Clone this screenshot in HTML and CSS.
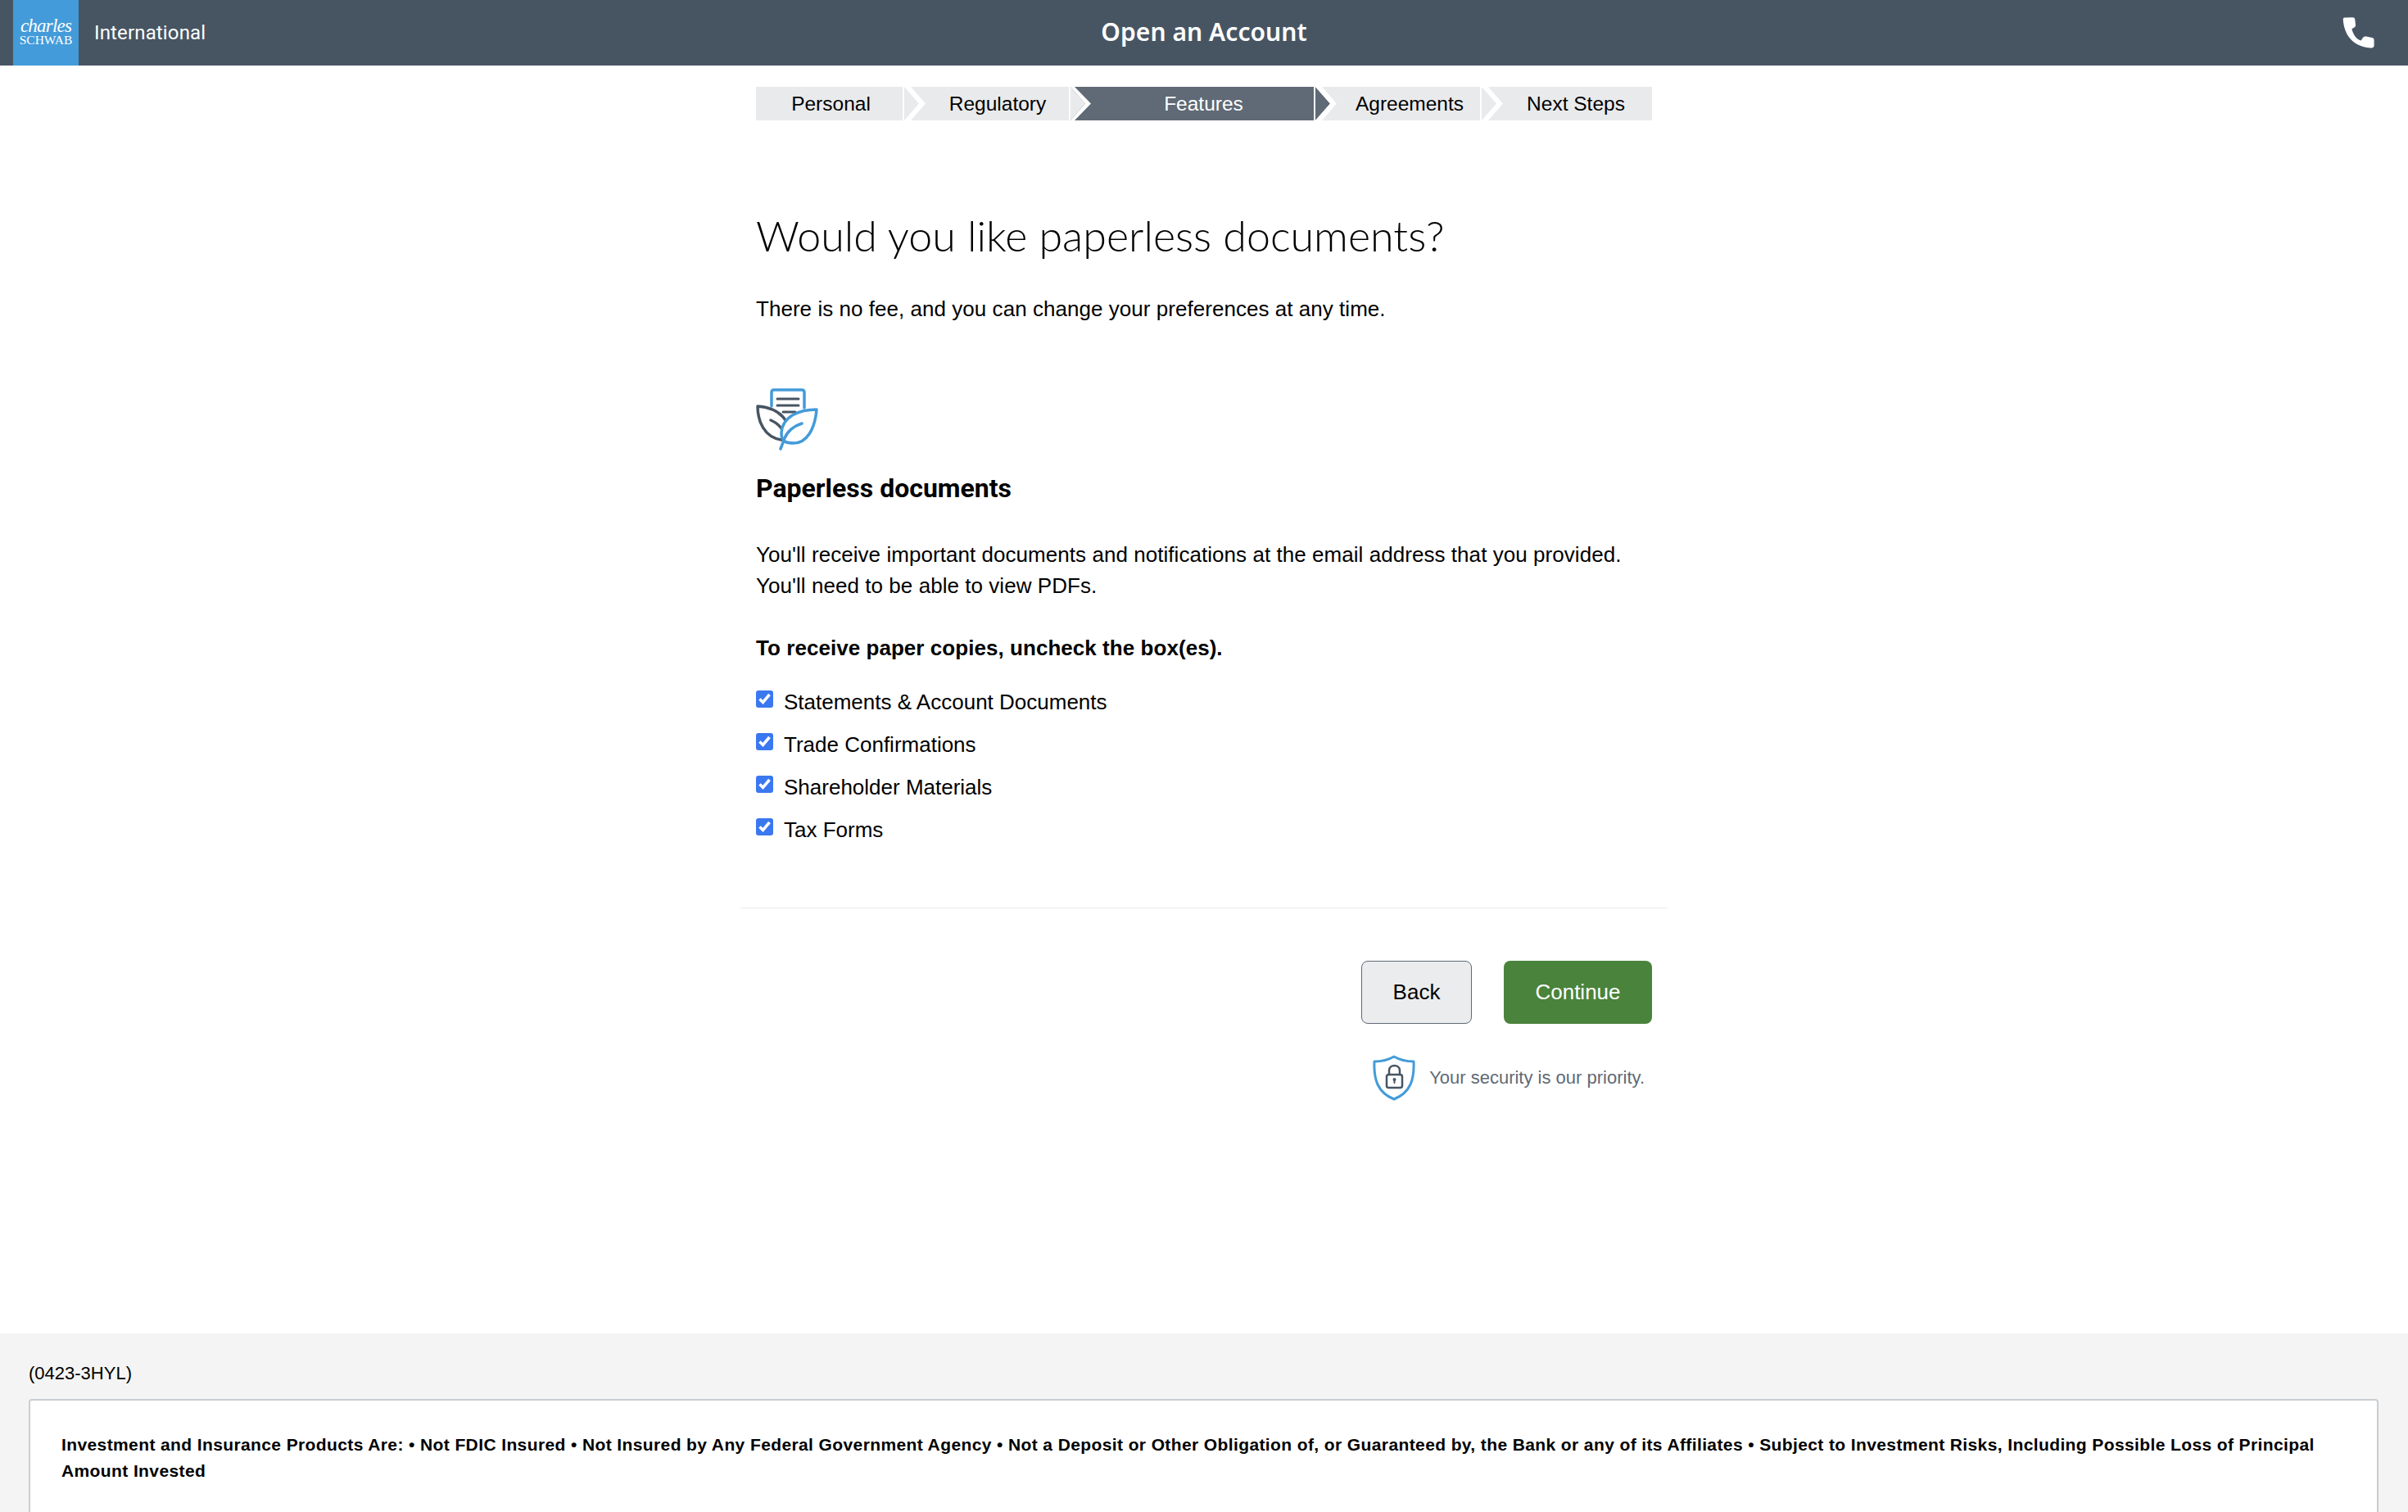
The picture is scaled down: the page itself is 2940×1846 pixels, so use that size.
FILE: index.html
```html
<!DOCTYPE html>
<html lang="en">
<head>
<meta charset="utf-8">
<title>Open an Account</title>
<link rel="stylesheet" href="styles.css">
</head>
<body>
<header class="topbar">
  <div class="brand">
    <div class="logo"><span class="logo-top">charles</span><span class="logo-bottom">SCHWAB</span></div>
    <span class="brand-label">International</span>
  </div>
  <div class="topbar-title">Open an Account</div>
  <svg class="phone" viewBox="0 0 40 40" width="40" height="40"><path fill="#fff" d="M2.5 1.5 C1 1.7 .6 2.8 .8 4.5 C2 19 9 36 34 38.6 C37 38.9 38.6 38 38.6 35.6 L38.6 29 C38.6 27 37.6 26.2 36 25.9 L29 24.6 C27 24.3 25.8 24.9 24.8 26.3 L22.6 29.6 C16.6 27.5 13 22 11.4 15.2 L14.4 13.6 C15.8 12.8 16.2 11.6 16 10 L15.2 3.6 C15 2 14 1.2 12.4 1.2 Z"/></svg>
</header>

<main class="content">
  <nav class="stepper">
    <div class="step s1"><span>Personal</span></div>
    <div class="step s2"><span>Regulatory</span></div>
    <div class="step s3"><span>Features</span></div>
    <div class="step s4"><span>Agreements</span></div>
    <div class="step s5"><span>Next Steps</span></div>
  </nav>

  <h1 class="title">Would you like paperless documents?</h1>
  <p class="lead">There is no fee, and you can change your preferences at any time.</p>

  <svg class="leaf" viewBox="0 0 76 76" width="76" height="76" fill="none" stroke-linecap="round" stroke-linejoin="round">
    <path stroke="#439bd9" stroke-width="3.5" d="M19 22 V5 Q19 2 22 2 H56 Q59 2 59 5 V24"/>
    <path stroke="#475563" stroke-width="3" d="M26 13 H52 M26 21 H52 M33 29 H48"/>
    <path stroke="#475563" stroke-width="3.5" d="M36 39 C28 27 16 23 2 22 C2 40 10 60 31 63"/>
    <path stroke="#475563" stroke-width="3.5" d="M18 39 C23 41 28 45 31 49"/>
    <path stroke="#439bd9" stroke-width="3.5" d="M74 26 C55 26 32 33 31 55 C31 66 38 67 46 67 C62 67 72 50 74 26 Z"/>
    <path stroke="#439bd9" stroke-width="3.5" d="M56 43 C46 46 38 53 35 61 L30 74"/>
  </svg>

  <h2 class="subtitle">Paperless documents</h2>
  <p class="body">You'll receive important documents and notifications at the email address that you provided.<br>You'll need to be able to view PDFs.</p>
  <p class="instruction">To receive paper copies, uncheck the box(es).</p>

  <ul class="checks">
    <li class="check"><span class="box"><svg viewBox="0 0 21 21" width="21" height="21"><path d="M4.5 10.5 L8.5 14.5 L16.5 5" fill="none" stroke="#fff" stroke-width="3.5"/></svg></span>Statements &amp; Account Documents</li>
    <li class="check"><span class="box"><svg viewBox="0 0 21 21" width="21" height="21"><path d="M4.5 10.5 L8.5 14.5 L16.5 5" fill="none" stroke="#fff" stroke-width="3.5"/></svg></span>Trade Confirmations</li>
    <li class="check"><span class="box"><svg viewBox="0 0 21 21" width="21" height="21"><path d="M4.5 10.5 L8.5 14.5 L16.5 5" fill="none" stroke="#fff" stroke-width="3.5"/></svg></span>Shareholder Materials</li>
    <li class="check"><span class="box"><svg viewBox="0 0 21 21" width="21" height="21"><path d="M4.5 10.5 L8.5 14.5 L16.5 5" fill="none" stroke="#fff" stroke-width="3.5"/></svg></span>Tax Forms</li>
  </ul>

  <hr class="rule">

  <div class="actions">
    <button class="btn btn-back">Back</button>
    <button class="btn btn-next">Continue</button>
  </div>
  <div class="security">
    <svg viewBox="0 0 52 56" width="52" height="56" fill="none" stroke-linecap="round">
      <path stroke="#439bd9" stroke-width="3" stroke-linejoin="round" d="M26 2 C19 6 10 8 2 8 C1 30 6 46 26 54 C46 46 51 30 50 8 C42 8 33 6 26 2 Z"/>
      <rect x="17" y="24" width="19" height="16" rx="2.5" stroke="#475563" stroke-width="2.5"/>
      <path stroke="#475563" stroke-width="2.5" d="M20 24 V19 C20 11 33 11 33 19 V24"/>
      <circle cx="26.5" cy="30" r="2" fill="#475563"/>
      <path stroke="#475563" stroke-width="2" d="M26.5 30 V34"/>
    </svg>
    <span>Your security is our priority.</span>
  </div>
</main>

<footer class="footer">
  <div class="code">(0423-3HYL)</div>
  <div class="notice">Investment and Insurance Products Are: • Not FDIC Insured • Not Insured by Any Federal Government Agency • Not a Deposit or Other Obligation of, or Guaranteed by, the Bank or any of its Affiliates • Subject to Investment Risks, Including Possible Loss of Principal Amount Invested</div>
</footer>
</body>
</html>
```
FILE: styles.css
```css
* { box-sizing: border-box; }
html, body { margin: 0; padding: 0; height: 1846px; overflow: hidden; background: #fff; }
body { font-family: "Liberation Sans", Arial, sans-serif; color: #000; display: flex; flex-direction: column; }

.topbar { height: 80px; flex: none; background: #475563; display: grid; grid-template-columns: 1fr auto 1fr; align-items: center; padding: 0 16px; }
.brand { display: flex; align-items: center; height: 80px; }
.logo { width: 80px; height: 80px; padding-top: 22px; background: #439bd9; color: #fff; font-family: "Liberation Serif", serif; display: flex; flex-direction: column; align-items: center; }
.logo-top { font-style: italic; font-size: 23px; line-height: 20px; letter-spacing: -.8px; }
.logo-bottom { font-size: 15.5px; line-height: 14px; letter-spacing: 0; }
.brand-label { margin-left: 19px; color: #fff; font-family: Roboto, sans-serif; font-size: 24px; letter-spacing: .15px; }
.topbar-title { color: #fff; font-family: "Noto Sans", sans-serif; font-weight: 600; font-size: 30px; letter-spacing: .05px; margin-top: -3px; }
.phone { justify-self: end; margin-right: 24px; }

.content { width: 1094px; margin: 0 auto; flex: none; }
.stepper { display: flex; height: 41px; margin-top: 26px; gap: 2px; }
.step { background: #e9eaec; position: relative; display: flex; align-items: center; justify-content: center; font-size: 24.5px; height: 41px; flex: none; }
.step span { position: relative; z-index: 3; }
.s1 { width: 179px; padding-left: 4px; }
.s2 { width: 201px; padding-left: 27px; }
.s3 { width: 297px; padding-left: 28px; background: #5f6a76; color: #fff; }
.s4 { width: 201px; padding-left: 29px; }
.s5 { width: 208px; padding-left: 22px; }
.step::before { content: ""; position: absolute; z-index: 2; left: 0; top: 0; width: 26px; height: 41px; background: #fff; clip-path: polygon(0 0, 8px 0, 26px 50%, 8px 100%, 0 100%, 18px 50%); }
.step::after { content: ""; position: absolute; z-index: 1; left: 0; top: 0; width: 18px; height: 41px; clip-path: polygon(0 0, 18px 50%, 0 100%); }
.s1::before, .s1::after { display: none; }
.s3::before { clip-path: polygon(0 0, 5px 0, 25px 50%, 5px 100%, 0 100%, 18px 50%); }
.s3::after { background: #e9eaec; }
.s4::after { background: #5f6a76; }

.title { font-family: Lato, sans-serif; font-weight: 300; font-size: 52px; line-height: 70px; margin: 105px 0 0; color: #000; }
.lead { font-size: 26px; line-height: 36px; margin: 37px 0 0; letter-spacing: .04px; }
.leaf { display: block; margin-top: 79px; }
.subtitle { font-family: Roboto, sans-serif; font-weight: 700; font-size: 32px; line-height: 40px; margin: 26px 0 0; }
.body { font-size: 26px; line-height: 38px; margin: 42px 0 0; letter-spacing: .05px; }
.instruction { font-size: 26px; font-weight: 700; line-height: 36px; margin: 39px 0 0; letter-spacing: .05px; }
.checks { list-style: none; margin: 22px 0 0; padding: 0; }
.check { display: flex; align-items: center; height: 52px; font-size: 26px; }
.box { width: 21px; height: 21px; background: #3b78f0; border-radius: 3px; margin-right: 13px; display: block; margin-top: -7px; flex: none; }
.box svg { display: block; }
.rule { border: 0; border-top: 1px solid #e8e8e8; margin: 69px -19px 0; }
.actions { display: flex; justify-content: flex-end; gap: 39px; margin-top: 64px; }
.btn { height: 77px; border-radius: 8px; font-family: "Liberation Sans", sans-serif; font-size: 26px; padding: 0; }
.btn-back { width: 135px; background: #ebecee; border: 1.5px solid #5f6a76; color: #000; }
.btn-next { width: 181px; background: #4a833b; border: 0; color: #fff; }
.security { display: flex; justify-content: flex-end; align-items: center; gap: 17px; margin-top: 38px; padding-right: 9px; color: #5f6a76; font-size: 22px; }

.footer { flex: none; margin-top: auto; height: 218px; background: #f4f4f4; padding: 36px 36px 0 35px; overflow: hidden; }
.code { font-size: 22px; line-height: 26px; }
.notice { margin-top: 18px; background: #fff; border: 2px solid #c8ced4; border-radius: 4px; height: 300px; padding: 38px; font-weight: 700; font-size: 21px; line-height: 32px; letter-spacing: .39px; }
```
